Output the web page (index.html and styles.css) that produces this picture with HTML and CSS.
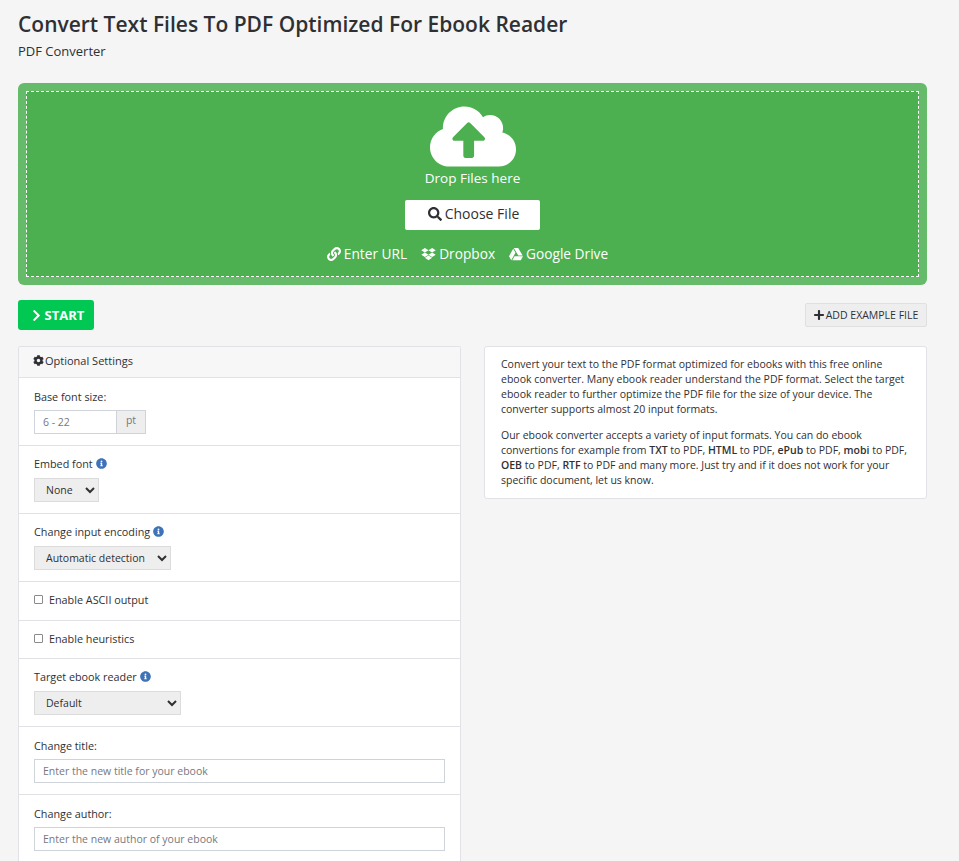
FILE: index.html
```html
<!DOCTYPE html>
<html>
  <head>
    <meta charset="utf-8">
    <title>Convert Text Files To PDF Optimized For Ebook Reader</title>
    <link rel="stylesheet" href="styles.css">
  </head>
  <body>
    <svg class="sprite" xmlns="http://www.w3.org/2000/svg">
      <symbol id="i-info" viewBox="0 0 512 512"><path d="M256 8C119.043 8 8 119.083 8 256c0 136.997 111.043 248 248 248s248-111.003 248-248C504 119.083 392.957 8 256 8zm0 110c23.196 0 42 18.804 42 42s-18.804 42-42 42-42-18.804-42-42 18.804-42 42-42zm56 254c0 6.627-5.373 12-12 12h-88c-6.627 0-12-5.373-12-12v-24c0-6.627 5.373-12 12-12h12v-64h-12c-6.627 0-12-5.373-12-12v-24c0-6.627 5.373-12 12-12h64c6.627 0 12 5.373 12 12v100h12c6.627 0 12 5.373 12 12v24z"/></symbol>
    </svg>

    <h1 class="title">Convert Text Files To PDF Optimized For Ebook Reader</h1>
    <p class="subtitle">PDF Converter</p>

    <div class="dropzone">
      <div class="dropzone-inner">
        <svg class="cloud" viewBox="0 0 640 512"><path d="M537.6 226.6c4.1-10.7 6.4-22.4 6.4-34.6 0-53-43-96-96-96-19.7 0-38.1 6-53.3 16.2C367 64.2 315.3 32 256 32c-88.4 0-160 71.6-160 160 0 2.7.1 5.4.2 8.1C40.2 219.8 0 273.2 0 336c0 79.5 64.5 144 144 144h368c70.7 0 128-57.3 128-128 0-61.9-44-113.6-102.4-125.4zM393.4 288H328v112c0 8.8-7.2 16-16 16h-48c-8.8 0-16-7.2-16-16V288h-65.4c-14.3 0-21.4-17.2-11.3-27.3l105.4-105.4c6.2-6.2 16.4-6.2 22.6 0l105.4 105.4c10.1 10.1 2.9 27.3-11.3 27.3z"/></svg>
        <div class="drop-text">Drop Files here</div>
        <a class="choose-btn" href="#">
          <svg class="icon" viewBox="0 0 512 512"><path d="M505 442.7L405.3 343c-4.5-4.5-10.6-7-17-7H372c27.6-35.3 44-79.7 44-128C416 93.1 322.9 0 208 0S0 93.1 0 208s93.1 208 208 208c48.3 0 92.7-16.4 128-44v16.3c0 6.4 2.5 12.5 7 17l99.7 99.7c9.4 9.4 24.6 9.4 33.9 0l28.3-28.3c9.4-9.4 9.4-24.6.1-34zM208 336c-70.7 0-128-57.2-128-128 0-70.7 57.2-128 128-128 70.7 0 128 57.2 128 128 0 70.7-57.2 128-128 128z"/></svg>
          Choose File
        </a>
        <div class="sources">
          <a href="#"><svg class="icon" viewBox="0 0 512 512"><path d="M326.612 185.391c59.747 59.809 58.927 155.698.36 214.59-.11.12-.24.25-.36.37l-67.2 67.2c-59.27 59.27-155.699 59.262-214.96 0-59.27-59.26-59.27-155.7 0-214.96l37.106-37.106c9.84-9.84 26.786-3.3 27.294 10.606.648 17.722 3.826 35.527 9.69 52.721 1.986 5.822.567 12.262-3.783 16.612l-13.087 13.087c-28.026 28.026-28.905 73.66-1.155 101.96 28.024 28.579 74.086 28.749 102.325.51l67.2-67.19c28.191-28.191 28.073-73.757 0-101.83-3.701-3.694-7.429-6.564-10.341-8.569a16.037 16.037 0 0 1-6.947-12.606c-.396-10.567 3.348-21.456 11.698-29.806l21.054-21.055c5.521-5.521 14.182-6.199 20.584-1.731a152.482 152.482 0 0 1 20.522 17.197zM467.547 44.449c-59.261-59.262-155.69-59.27-214.96 0l-67.2 67.2c-.12.12-.25.25-.36.37-58.566 58.892-59.387 154.781.36 214.59a152.454 152.454 0 0 0 20.521 17.196c6.402 4.468 15.064 3.789 20.584-1.731l21.054-21.055c8.35-8.35 12.094-19.239 11.698-29.806a16.037 16.037 0 0 0-6.947-12.606c-2.912-2.005-6.64-4.875-10.341-8.569-28.073-28.073-28.191-73.639 0-101.83l67.2-67.19c28.239-28.239 74.3-28.069 102.325.51 27.75 28.3 26.872 73.934-1.155 101.96l-13.087 13.087c-4.35 4.35-5.769 10.79-3.783 16.612 5.864 17.194 9.042 34.999 9.69 52.721.509 13.906 17.454 20.446 27.294 10.606l37.106-37.106c59.271-59.259 59.271-155.699.001-214.959z"/></svg> Enter URL</a>
          <a href="#"><svg class="icon icon-wide" viewBox="0 0 528 512"><path d="M264.4 116.3l-132 84.3 132 84.3-132 84.3L0 284.1l132.3-84.3L0 116.3 132.3 32l132.1 84.3zM131.6 395.7l132-84.3 132 84.3-132 84.3-132-84.3zm132.8-111.6l132-84.3-132-83.6L396.1 32 528 116.3l-132.3 84.3L528 284.8l-131.9 84.3-131.7-85z"/></svg> Dropbox</a>
          <a href="#"><svg class="icon" viewBox="0 0 512 512"><path d="M339 314.9L175.4 32h161.2l163.6 282.9H339zm-137.5 23.6L120.9 480h310.5L512 338.5H201.5zM154.1 67.4L0 338.5 80.6 480 237 208.8 154.1 67.4z"/></svg> Google Drive</a>
        </div>
      </div>
    </div>

    <div class="actions">
      <a class="start-btn" href="#">
        <svg class="icon-start" viewBox="0 0 320 512"><path d="M285.476 272.971L91.132 467.314c-9.373 9.373-24.569 9.373-33.941 0l-22.667-22.667c-9.357-9.357-9.375-24.522-.04-33.901L188.505 256 34.484 101.255c-9.335-9.379-9.317-24.544.04-33.901l22.667-22.667c9.373-9.373 24.569-9.373 33.941 0L285.475 239.03c9.373 9.372 9.373 24.568.001 33.941z"/></svg>
        START
      </a>
      <a class="example-btn" href="#">
        <svg class="icon-plus" viewBox="0 0 448 512"><path d="M416 208H272V64c0-17.67-14.33-32-32-32h-32c-17.67 0-32 14.33-32 32v144H32c-17.67 0-32 14.33-32 32v32c0 17.67 14.33 32 32 32h144v144c0 17.67 14.33 32 32 32h32c17.67 0 32-14.33 32-32V304h144c17.67 0 32-14.33 32-32v-32c0-17.67-14.33-32-32-32z"/></svg>
        ADD EXAMPLE FILE
      </a>
    </div>

    <div class="columns">
      <div class="settings">
        <div class="settings-head">
          <svg class="icon-cog" viewBox="0 0 512 512"><path d="M487.4 315.7l-42.6-24.6c4.3-23.2 4.3-47 0-70.2l42.6-24.6c4.9-2.8 7.1-8.6 5.5-14-11.1-35.6-30-67.8-54.7-94.6-3.8-4.1-10-5.1-14.8-2.3L380.8 110c-17.9-15.4-38.5-27.3-60.8-35.1V25.8c0-5.6-3.9-10.5-9.4-11.7-36.7-8.2-74.3-7.8-109.2 0-5.5 1.2-9.4 6.1-9.4 11.7V75c-22.2 7.9-42.8 19.8-60.8 35.1L88.7 85.5c-4.9-2.8-11-1.9-14.8 2.3-24.7 26.7-43.6 58.9-54.7 94.6-1.7 5.4.6 11.2 5.5 14L67.3 221c-4.3 23.2-4.3 47 0 70.2l-42.6 24.6c-4.9 2.8-7.1 8.6-5.5 14 11.1 35.6 30 67.8 54.7 94.6 3.8 4.1 10 5.1 14.8 2.3l42.6-24.6c17.9 15.4 38.5 27.3 60.8 35.1v49.2c0 5.6 3.9 10.5 9.4 11.7 36.7 8.2 74.3 7.8 109.2 0 5.5-1.2 9.4-6.1 9.4-11.7v-49.2c22.2-7.9 42.8-19.8 60.8-35.1l42.6 24.6c4.9 2.8 11 1.9 14.8-2.3 24.7-26.7 43.6-58.9 54.7-94.6 1.5-5.5-.7-11.3-5.6-14.1zM256 336c-44.1 0-80-35.9-80-80s35.9-80 80-80 80 35.9 80 80-35.9 80-80 80z"/></svg>
          Optional Settings
        </div>

        <div class="row">
          <label class="row-label">Base font size:</label>
          <div class="input-group">
            <input class="field field-size" type="text" placeholder="6 - 22">
            <span class="addon">pt</span>
          </div>
        </div>

        <div class="row row-info">
          <label class="row-label">Embed font <svg class="icon-info"><use href="#i-info"/></svg></label>
          <select class="pick pick-font"><option>None</option></select>
        </div>

        <div class="row row-info">
          <label class="row-label">Change input encoding <svg class="icon-info"><use href="#i-info"/></svg></label>
          <select class="pick"><option>Automatic detection</option></select>
        </div>

        <div class="row row-check">
          <label class="check"><input type="checkbox"> Enable ASCII output</label>
        </div>

        <div class="row row-check row-check-short">
          <label class="check"><input type="checkbox"> Enable heuristics</label>
        </div>

        <div class="row row-info">
          <label class="row-label">Target ebook reader <svg class="icon-info"><use href="#i-info"/></svg></label>
          <select class="pick pick-reader"><option>Default</option></select>
        </div>

        <div class="row">
          <label class="row-label">Change title:</label>
          <input class="field" type="text" placeholder="Enter the new title for your ebook">
        </div>

        <div class="row">
          <label class="row-label">Change author:</label>
          <input class="field" type="text" placeholder="Enter the new author of your ebook">
        </div>
      </div>

      <div class="about">
        <p>Convert your text to the PDF format optimized for ebooks with this free online ebook converter. Many ebook reader understand the PDF format. Select the target ebook reader to further optimize the PDF file for the size of your device. The converter supports almost 20 input formats.</p>
        <p>Our ebook converter accepts a variety of input formats. You can do ebook convertions for example from <b>TXT</b> to PDF, <b>HTML</b> to PDF, <b>ePub</b> to PDF, <b>mobi</b> to PDF, <b>OEB</b> to PDF, <b>RTF</b> to PDF and many more. Just try and if it does not work for your specific document, let us know.</p>
      </div>
    </div>
  </body>
</html>
```

FILE: styles.css
```css
html, body{
  height: 861px;
  overflow: hidden;
}
body{
  margin: 0;
  padding: 10px 32px 0 18px;
  box-sizing: border-box;
  background: #f5f5f5;
  color: #2f3033;
  font-family: "Open Sans", sans-serif;
  font-size: 10.5px;
  line-height: 15px;
}
a{
  text-decoration: none;
}
.sprite{
  display: none;
}
.title{
  margin: 0;
  font-size: 21px;
  line-height: 28px;
  font-weight: 600;
}
.subtitle{
  margin: 5px 0 0;
  font-size: 13px;
  line-height: 17px;
}
.dropzone{
  margin-top: 23px;
  padding: 8px;
  background: #66bb6a;
  border-radius: 6px;
}
.dropzone-inner{
  height: 186px;
  box-sizing: border-box;
  padding-top: 10px;
  background: #4caf50;
  border: 1px dashed #fff;
  display: flex;
  flex-direction: column;
  align-items: center;
  color: #fff;
}
.cloud{
  width: 86px;
  height: 69px;
  fill: #fff;
}
.drop-text{
  font-size: 13.5px;
  line-height: 19px;
  margin-top: -2px;
}
.choose-btn{
  margin-top: 12px;
  width: 135px;
  height: 30px;
  box-sizing: border-box;
  padding: 0 0 3px 2px;
  background: #fff;
  border-radius: 2px;
  color: #2f3033;
  font-size: 14px;
  display: flex;
  align-items: center;
  justify-content: center;
  gap: 3px;
}
.icon{
  width: 14px;
  height: 14px;
  fill: currentColor;
}
.icon-wide{
  width: 15px;
}
.sources{
  margin-top: 14px;
  padding-right: 10px;
  display: flex;
  gap: 14px;
  font-size: 13.7px;
  line-height: 19px;
}
.sources a{
  color: #fff;
  display: flex;
  align-items: center;
  gap: 3px;
}
.actions{
  margin-top: 15px;
  display: flex;
  justify-content: space-between;
  align-items: center;
}
.start-btn{
  width: 76px;
  height: 30px;
  box-sizing: border-box;
  padding-left: 4px;
  background: #00c853;
  border-radius: 3px;
  color: #fff;
  font-size: 13px;
  font-weight: 700;
  display: flex;
  align-items: center;
  justify-content: center;
  gap: 4px;
}
.icon-start{
  width: 9px;
  height: 13px;
  fill: #fff;
}
.example-btn{
  width: 122px;
  height: 24px;
  box-sizing: border-box;
  background: #eee;
  border: 1px solid #e0e0e0;
  border-radius: 2px;
  color: #2f3033;
  font-size: 10.5px;
  display: flex;
  align-items: center;
  justify-content: center;
  gap: 2px;
}
.icon-plus{
  width: 10px;
  height: 12px;
  fill: #2f3033;
}
.columns{
  margin-top: 16px;
  display: grid;
  grid-template-columns: 443px 443px;
  gap: 23px;
  align-items: start;
}
.settings{
  background: #fff;
  border: 1px solid #e2e2e6;
  border-radius: 2px 2px 0 0;
}
.settings-head{
  height: 30px;
  padding: 0 0 4px 14px;
  box-sizing: border-box;
  background: #f7f7f7;
  display: flex;
  align-items: center;
  gap: 1px;
  font-size: 11px;
  font-weight: 500;
}
.icon-cog{
  width: 11px;
  height: 11px;
  fill: #2f3033;
}
.row{
  height: 68px;
  box-sizing: border-box;
  padding: 11px 15px 0;
  border-top: 1px solid #e2e2e6;
}
.row-info{
  padding-top: 10px;
}
.row-info .row-label{
  margin-bottom: 7px;
}
.row-check{
  height: 39px;
  padding-top: 10px;
}
.row-check-short{
  height: 38px;
}
.row-label{
  display: flex;
  align-items: center;
  gap: 3px;
  height: 15px;
  margin-bottom: 6px;
  font-size: 10.8px;
  font-weight: 500;
}
.icon-info{
  width: 11px;
  height: 11px;
  fill: #3f72b8;
}
.check{
  display: flex;
  align-items: center;
  gap: 6px;
  height: 15px;
  font-size: 10.8px;
  font-weight: 500;
}
.check input{
  appearance: none;
  width: 9px;
  height: 9px;
  margin: 0;
  background: #fff;
  border: 1px solid #8a8a8a;
  border-radius: 1px;
}
.input-group{
  display: flex;
}
.field{
  display: block;
  width: 100%;
  height: 24px;
  box-sizing: border-box;
  padding: 0 8px;
  background: #fff;
  border: 1px solid #cfd4da;
  border-radius: 0;
  color: #2f3033;
  font-family: inherit;
  font-size: 10.5px;
}
.field::placeholder{
  color: #77777f;
  opacity: 1;
}
.field-size{
  width: 83px;
}
.addon{
  width: 29px;
  height: 24px;
  box-sizing: border-box;
  background: #eee;
  border: 1px solid #cfd4da;
  border-left: 0;
  color: #77777f;
  font-size: 10.5px;
  line-height: 18px;
  text-align: center;
}
.pick{
  display: block;
  height: 24px;
  width: 137px;
  box-sizing: border-box;
  padding: 0 7px;
  background: #eee;
  border: 1px solid #dcdcdc;
  border-radius: 0;
  color: #2f3033;
  font-family: inherit;
  font-size: 10.5px;
}
.pick-font{
  width: 65px;
}
.pick-reader{
  width: 147px;
}
.about{
  background: #fff;
  border: 1px solid #e2e2e6;
  border-radius: 3px;
  padding: 10px 14px 10px 16px;
}
.about p{
  margin: 0;
}
.about p + p{
  margin-top: 11px;
}
.about b{
  font-weight: 600;
}
```
